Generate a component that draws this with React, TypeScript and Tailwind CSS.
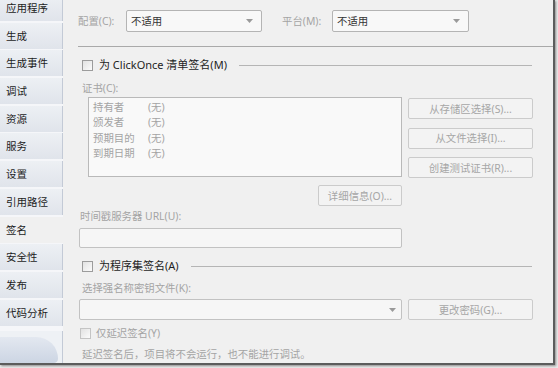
import React from 'react';

const tabs = ['应用程序', '生成', '生成事件', '调试', '资源', '服务', '设置', '引用路径', '签名', '安全性', '发布', '代码分析'];

const certRows = [
  ['持有者', '(无)'],
  ['颁发者', '(无)'],
  ['预期目的', '(无)'],
  ['到期日期', '(无)'],
];

function CheckBox({ dim }: { dim?: boolean }) {
  return (
    <div
      className={`w-[11px] h-[11px] shrink-0 border ${dim ? 'border-[#c4c4c4]' : 'border-[#9c9c9c]'} bg-gradient-to-br from-[#e2e2e2] to-[#fbfbfb]`}
    />
  );
}

function Arrow() {
  return (
    <svg width="7" height="4" viewBox="0 0 7 4" className="shrink-0">
      <path d="M0 0h7L3.5 4z" fill="#9a9a9a" />
    </svg>
  );
}

function Combo({ width, text }: { width: string; text?: string }) {
  return (
    <div
      className={`${width} h-[22px] flex items-center justify-between pl-[4px] pr-[8px] border border-[#b4b4b4] rounded-[2px] bg-[#f8f8f8]`}
    >
      <span className="text-[#333333]">{text}</span>
      <Arrow />
    </div>
  );
}

function Button({ label, className = '' }: { label: string; className?: string }) {
  return (
    <div
      className={`h-[21px] flex items-center justify-center border border-[#cbcbcb] rounded-[2px] bg-[#f3f3f3] text-[#a6a6a6] ${className}`}
    >
      {label}
    </div>
  );
}

export default function App() {
  return (
    <div
      className="w-[558px] h-[368px] bg-[#e9e9e9] overflow-hidden text-[10.4px] leading-[14px]"
      style={{ fontFamily: '"Noto Sans", "Noto Sans CJK SC", sans-serif' }}
    >
      <div className="w-[555px] h-[365px] flex border-r-2 border-b-2 border-[#5c5c5c] shadow-[1px_1px_2px_rgba(0,0,0,0.4)]">
        {/* Sidebar tabs */}
        <div className="w-[63px] shrink-0 flex flex-col bg-[#f5f6f9]">
          <div className="flex flex-col -mt-[5px]">
            {tabs.map((t) => {
              const active = t === '签名';
              return (
                <div
                  key={t}
                  className={`h-[26px] mb-[1.7px] flex items-center pl-[6px] text-[10.5px] text-[#1c1c1c] ${
                    active
                      ? 'bg-[#f0f0f0]'
                      : 'bg-gradient-to-b from-[#edf0f4] to-[#e0e4eb] border-r border-[#c3cad6]'
                  }`}
                >
                  {t}
                </div>
              );
            })}
          </div>
          <div className="flex-1 mt-[4px] border-r border-[#c3cad6] bg-[#eef1f5] flex flex-col justify-end">
            <div className="h-[26px] mr-[4px] rounded-tr-[30px] rounded-br-[6px] bg-gradient-to-b from-[#e3e8f0] to-[#ccd5e3]" />
          </div>
        </div>

        {/* Content */}
        <div className="flex-1 bg-[#f0f0f0] flex flex-col pl-[16px] text-[#a4a4a4]">
          <div className="flex items-center mt-[10px] h-[22px]">
            <span className="-ml-[1px] w-[48px]">配置(C):</span>
            <Combo width="w-[136px]" text="不适用" />
            <span className="ml-[20px] w-[50px]">平台(M):</span>
            <Combo width="w-[137px]" text="不适用" />
          </div>

          <div className="mt-[14px] h-px bg-[#a9a9a9] -ml-px" />

          <div className="mt-[10px] h-[16px] flex items-center">
            <div className="ml-[3px]">
              <CheckBox />
            </div>
            <span className="ml-[6px] text-[11px] text-[#1e1e1e]">为 ClickOnce 清单签名(M)</span>
            <div className="flex-1 ml-[12px] mr-[21px] h-px bg-[#b5b5b5]" />
          </div>

          <div className="mt-[7px] h-[16px] ml-[3px] flex items-center">证书(C):</div>

          <div className="mt-[1px] flex">
            <div className="ml-[9px] w-[314px] h-[80px] border border-[#b9b9b9] bg-[#f9f9f9] pt-[2px] pl-[4px]">
              {certRows.map(([k, v]) => (
                <div key={k} className="flex h-[15.3px] items-center leading-[13px]">
                  <span className="w-[55px]">{k}</span>
                  <span>{v}</span>
                </div>
              ))}
            </div>
            <div className="ml-[6px] w-[125px] flex flex-col pt-[1px] gap-[8.5px]">
              <Button label="从存储区选择(S)..." />
              <Button label="从文件选择(I)..." />
              <Button label="创建测试证书(R)..." />
            </div>
          </div>

          <div className="mt-[7px] flex">
            <Button label="详细信息(O)..." className="ml-[239px] w-[84px]" />
          </div>

          <div className="mt-[2px] h-[16px] ml-[1px] flex items-center">时间戳服务器 URL(U):</div>
          <div className="mt-[4px] w-[323px] h-[20px] border border-[#c2c2c2] rounded-[2px] bg-[#f6f6f6]" />

          <div className="mt-[10px] h-[16px] flex items-center">
            <div className="ml-[3px]">
              <CheckBox />
            </div>
            <span className="ml-[6px] text-[11px] text-[#1e1e1e]">为程序集签名(A)</span>
            <div className="flex-1 ml-[12px] mr-[21px] h-px bg-[#b5b5b5]" />
          </div>

          <div className="mt-[6px] h-[16px] ml-[3px] flex items-center">选择强名称密钥文件(K):</div>

          <div className="mt-[3px] flex">
            <div className="w-[323px] h-[21px] flex items-center justify-end pr-[5px] border border-[#c2c2c2] rounded-[2px] bg-[#f6f6f6]">
              <Arrow />
            </div>
            <Button label="更改密码(G)..." className="ml-[6px] w-[125px]" />
          </div>

          <div className="mt-[5px] h-[16px] flex items-center">
            <div className="ml-[1px]">
              <CheckBox dim />
            </div>
            <span className="ml-[5px]">仅延迟签名(Y)</span>
          </div>

          <div className="mt-[5px] h-[16px] ml-[3px] flex items-center">延迟签名后，项目将不会运行，也不能进行调试。</div>
        </div>
      </div>
    </div>
  );
}
